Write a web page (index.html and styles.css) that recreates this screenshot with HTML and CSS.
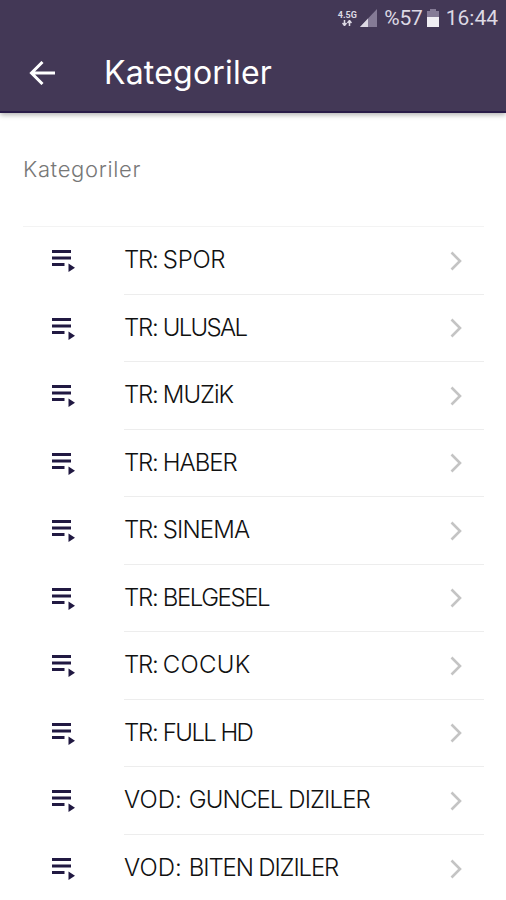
FILE: index.html
```
<!DOCTYPE html>
<html lang="tr">
<head>
    <meta charset="UTF-8">
    <meta name="viewport" content="width=device-width, initial-scale=1.0">
    <title>Kategoriler</title>
    <link rel="stylesheet" href="styles.css">
</head>
<body>
    <svg class="sprite" width="0" height="0" aria-hidden="true">
        <symbol id="playlist" viewBox="0 0 24 22">
            <path d="M0 0h19v3H0zM0 6.500h19v3H0zM0 13h12.500v3H0zM16.500 13.500v8.500l6.500-4.200z"/>
        </symbol>
        <symbol id="chevron" viewBox="0 0 12 20">
            <path d="M1.500 1.500 10 10l-8.500 8.500" fill="none" stroke="currentColor" stroke-width="2.600"/>
        </symbol>
    </svg>

    <header class="header">
        <div class="status-bar">
            <div class="network">
                <span>4.5G</span>
                <svg width="10" height="6" viewBox="0 0 10 6"><path d="M2.500 0v5M.5 3l2 2.500 2-2.500M7.500 6V1M5.500 3l2-2.500 2 2.500" fill="none" stroke="currentColor" stroke-width="1.500"/></svg>
            </div>
            <svg class="signal" width="17" height="18" viewBox="0 0 17 18">
                <path d="M17 0v18H0z" fill="#857b96"/>
                <path d="M8 9.500V18H0z" fill="#ddd9e4"/>
            </svg>
            <span class="percent">%57</span>
            <svg class="battery" width="12" height="18" viewBox="0 0 12 18">
                <path d="M3 0h6v2h3v6H0V2h3z" fill="#857b96"/>
                <path d="M0 8h12v10H0z" fill="#f0eef3"/>
            </svg>
            <span class="clock">16:44</span>
        </div>
        <div class="toolbar">
            <svg class="back" width="26" height="24" viewBox="0 0 26 24"><path d="M13.500 1 2.500 12l11 11M2.500 12H26" fill="none" stroke="currentColor" stroke-width="3"/></svg>
            <h1 class="title">Kategoriler</h1>
        </div>
    </header>

    <main class="content">
        <h2 class="list-header">Kategoriler</h2>
        <ul class="list">
            <li class="item">
                <svg class="item-icon"><use href="#playlist"/></svg>
                <div class="item-inner"><span class="label spor"><span class="tr">TR: </span>SPOR</span><svg class="arrow"><use href="#chevron"/></svg></div>
            </li>
            <li class="item">
                <svg class="item-icon"><use href="#playlist"/></svg>
                <div class="item-inner"><span class="label ulusal"><span class="tr">TR: </span>ULUSAL</span><svg class="arrow"><use href="#chevron"/></svg></div>
            </li>
            <li class="item">
                <svg class="item-icon"><use href="#playlist"/></svg>
                <div class="item-inner"><span class="label muzik"><span class="tr">TR: </span>MUZiK</span><svg class="arrow"><use href="#chevron"/></svg></div>
            </li>
            <li class="item">
                <svg class="item-icon"><use href="#playlist"/></svg>
                <div class="item-inner"><span class="label haber"><span class="tr">TR: </span>HABER</span><svg class="arrow"><use href="#chevron"/></svg></div>
            </li>
            <li class="item">
                <svg class="item-icon"><use href="#playlist"/></svg>
                <div class="item-inner"><span class="label sinema"><span class="tr">TR: </span>SINEMA</span><svg class="arrow"><use href="#chevron"/></svg></div>
            </li>
            <li class="item">
                <svg class="item-icon"><use href="#playlist"/></svg>
                <div class="item-inner"><span class="label belgesel"><span class="tr">TR: </span>BELGESEL</span><svg class="arrow"><use href="#chevron"/></svg></div>
            </li>
            <li class="item">
                <svg class="item-icon"><use href="#playlist"/></svg>
                <div class="item-inner"><span class="label cocuk"><span class="tr">TR: </span>COCUK</span><svg class="arrow"><use href="#chevron"/></svg></div>
            </li>
            <li class="item">
                <svg class="item-icon"><use href="#playlist"/></svg>
                <div class="item-inner"><span class="label full-hd"><span class="tr">TR: </span>FULL HD</span><svg class="arrow"><use href="#chevron"/></svg></div>
            </li>
            <li class="item">
                <svg class="item-icon"><use href="#playlist"/></svg>
                <div class="item-inner"><span class="label guncel"><span class="vod">VOD: </span>GUNCEL DIZILER</span><svg class="arrow"><use href="#chevron"/></svg></div>
            </li>
            <li class="item">
                <svg class="item-icon"><use href="#playlist"/></svg>
                <div class="item-inner"><span class="label biten"><span class="vod">VOD: </span>BITEN DIZILER</span><svg class="arrow"><use href="#chevron"/></svg></div>
            </li>
        </ul>
    </main>
</body>
</html>
```
FILE: styles.css
```
* {
    margin: 0;
    padding: 0;
    box-sizing: border-box;
}

body {
    height: 900px;
    overflow: hidden;
    background: #fff;
    font-family: Inter, "Open Sans", sans-serif;
}

svg {
    display: block;
    flex: none;
}

.sprite {
    position: absolute;
}

.header {
    height: 113px;
    background: #433856;
    border-bottom: 2px solid #291b48;
    box-shadow: 0 2px 5px rgba(0, 0, 0, 0.3);
    color: #fff;
}

.status-bar {
    display: flex;
    align-items: center;
    justify-content: flex-end;
    height: 36px;
    padding-right: 8px;
    color: #ddd9e4;
    font-family: Roboto, sans-serif;
    font-size: 21px;
}

.network {
    display: flex;
    flex-direction: column;
    align-items: center;
    width: 20px;
    margin-right: 3px;
    font-size: 9px;
    font-weight: 700;
    line-height: 10px;
}

.signal {
    margin-right: 7px;
}

.percent {
    letter-spacing: -0.2px;
}

.battery {
    margin: 0 7px 0 4px;
}

.toolbar {
    display: flex;
    align-items: center;
    height: 74px;
    padding-left: 29px;
}

.back {
    margin-right: 49px;
}

.title {
    font-size: 32px;
    font-weight: 400;
    line-height: 40px;
    letter-spacing: 0.2px;
}

.content {
    padding: 40px 22px 0 23px;
}

.list-header {
    height: 73px;
    color: #777;
    font-size: 22px;
    font-weight: 300;
    line-height: 32px;
    letter-spacing: 0.65px;
}

.list {
    border-top: 1px solid #f3f3f3;
    list-style: none;
}

.item {
    display: flex;
    height: 67.500px;
    padding-left: 29px;
}

.item-icon {
    width: 24px;
    height: 22px;
    margin: 23px 48px 0 0;
    fill: #211942;
}

.item-inner {
    display: flex;
    flex: 1;
    align-items: center;
    justify-content: space-between;
    padding-right: 22px;
    border-bottom: 1px solid #ededed;
}

.item:last-child .item-inner {
    border-bottom: 0;
}

.label {
    color: #111;
    font-size: 24px;
    font-weight: 300;
    line-height: 30px;
    white-space: nowrap;
}

.tr {
    letter-spacing: -1.300px;
}

.vod {
    letter-spacing: 0.100px;
}

.spor {
    letter-spacing: -0.3px;
}

.ulusal {
    letter-spacing: -1.700px;
}

.muzik,
.haber {
    letter-spacing: -1px;
}

.sinema {
    letter-spacing: -0.9px;
}

.belgesel {
    letter-spacing: -1.450px;
}

.cocuk {
    letter-spacing: 0.300px;
}

.full-hd {
    letter-spacing: -1.600px;
}

.guncel {
    letter-spacing: -0.900px;
}

.biten {
    letter-spacing: -1.150px;
}

.arrow {
    width: 12px;
    height: 20px;
    margin-top: 1px;
    color: #c4c4c4;
}
```
